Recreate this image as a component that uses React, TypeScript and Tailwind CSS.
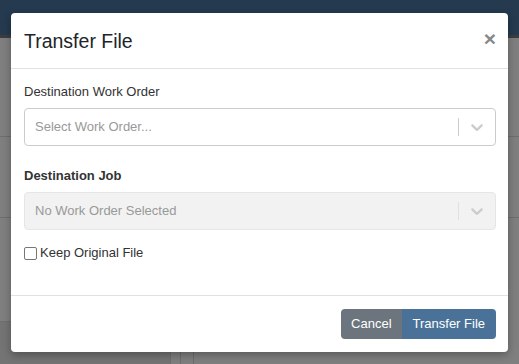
const Chevron = () => (
  <svg width="20" height="20" viewBox="0 0 20 20" className="fill-[#cccccc]">
    <path d="M4.516 7.548c0.436-0.446 1.043-0.481 1.576 0l3.908 3.747 3.908-3.747c0.533-0.481 1.141-0.446 1.574 0 0.436 0.445 0.408 1.197 0 1.615-0.406 0.418-4.695 4.502-4.695 4.502-0.217 0.223-0.502 0.335-0.787 0.335s-0.57-0.112-0.789-0.335c0 0-4.287-4.084-4.695-4.502s-0.436-1.17 0-1.615z" />
  </svg>
);

function SelectBox({ text, disabled }: { text: string; disabled?: boolean }) {
  return (
    <div
      className={`flex h-[38px] items-center rounded-[4px] border ${
        disabled ? 'border-[#e6e6e6] bg-[#f2f2f2]' : 'border-[#cccccc] bg-white'
      }`}
    >
      <div className="flex-1 pl-[10px] text-[13px] text-[#999999]">{text}</div>
      <span className={`h-[18px] w-px ${disabled ? 'bg-[#e0e0e0]' : 'bg-[#cccccc]'}`} />
      <div className="flex w-[36px] items-center justify-center">
        <Chevron />
      </div>
    </div>
  );
}

export default function App() {
  return (
    <div className="relative h-[364px] w-[519px] overflow-hidden bg-[#7f7f7f] font-['Liberation_Sans',Arial,sans-serif]">
      {/* dimmed page behind the modal */}
      <div className="h-[35px] bg-[#253a4f]" />
      <div className="h-[3px] bg-[#3b3d40]" />
      <div className="flex h-[326px]">
        <div className="flex w-[170px] flex-col">
          <div className="h-[99px] border-b border-[#6e6e6e]" />
          <div className="h-[81px] border-b border-[#6e6e6e]" />
          <div className="h-[104px] border-b border-[#6e6e6e]" />
          <div className="flex-1 bg-[#747474]" />
        </div>
        <div className="w-[11px] border-x border-[#6e6e6e]" />
        <div className="w-[13px] border-r border-[#6e6e6e]" />
        <div className="flex flex-1 flex-col">
          <div className="h-[99px] border-b border-[#6e6e6e]" />
          <div className="h-[81px] border-b border-[#6e6e6e]" />
        </div>
      </div>

      {/* modal */}
      <div className="absolute left-[11px] top-[13px] w-[497px] rounded-[4px] bg-white shadow-[0_3px_9px_rgba(0,0,0,0.3)]">
        <div className="flex h-[56px] items-center justify-between border-b border-[#dee2e6] pl-[13px] pr-[12px]">
          <h4 className="text-[19.5px] leading-[30px] text-[#212529]">Transfer File</h4>
          <button className="mb-[4px] text-[21px] font-bold leading-none text-[#888888]">×</button>
        </div>

        <div className="h-[226px] pl-[13px] pr-[12px] pt-[13px] text-[13px] text-[#333333]">
          <div className="mb-[6px] leading-[20px]">Destination Work Order</div>
          <SelectBox text="Select Work Order..." />
          <div className="mb-[6px] mt-[20px] font-bold leading-[20px]">Destination Job</div>
          <SelectBox text="No Work Order Selected" disabled />
          <label className="mt-[13px] flex items-center leading-[20px]">
            <span className="mr-[3px] h-[13px] w-[13px] rounded-[2px] border border-[#767676] bg-white" />
            Keep Original File
          </label>
        </div>

        <div className="flex justify-end border-t border-[#dee2e6] py-[13px] pl-[13px] pr-[12px]">
          <div className="flex text-[13px] text-white">
            <button className="h-[30px] rounded-l-[4px] bg-[#6c757d] px-[10px]">Cancel</button>
            <button className="h-[30px] rounded-r-[4px] bg-[#4a7298] px-[11px]">Transfer File</button>
          </div>
        </div>
      </div>
    </div>
  );
}
